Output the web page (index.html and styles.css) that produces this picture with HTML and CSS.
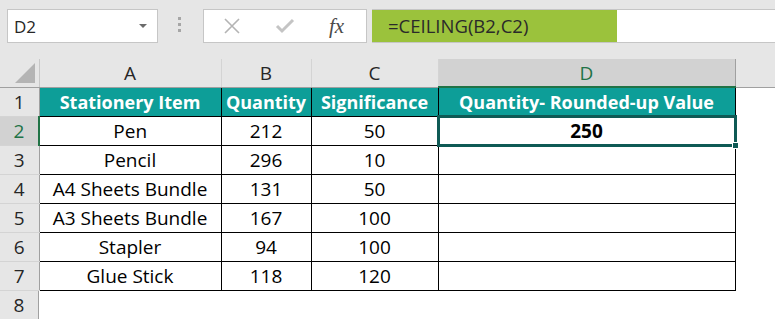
FILE: index.html
```html
<!DOCTYPE html>
<html lang="en">
<head>
  <meta charset="UTF-8">
  <title>CEILING example</title>
  <link rel="stylesheet" href="styles.css">
</head>
<body>
  <div class="toolbar">
    <div class="namebox">
      <span>D2</span>
      <svg class="caret" width="8" height="5" viewBox="0 0 8 5"><path d="M0 0h8L4 4z" fill="#6b6b6b"/></svg>
    </div>
    <div class="grip"><i></i><i></i><i></i></div>
    <div class="fx-buttons">
      <svg width="18" height="18" viewBox="0 0 18 18"><path d="M2 2l14 14M16 2L2 16" stroke="#b4b4b4" stroke-width="1.6" fill="none"/></svg>
      <svg width="20" height="18" viewBox="0 0 20 18"><path d="M2 9l5 5L18 3" stroke="#c4c4c4" stroke-width="3" fill="none"/></svg>
      <span class="fx">fx</span>
    </div>
    <div class="formula">
      <div class="formula-text">=CEILING(B2,C2)</div>
    </div>
  </div>

  <table class="sheet">
    <colgroup>
      <col class="c-row"><col class="c-a"><col class="c-b"><col class="c-c"><col class="c-d"><col>
    </colgroup>
    <tr class="colhead">
      <th class="corner"><span class="tri"></span></th>
      <th>A</th><th>B</th><th>C</th><th class="active">D</th><th class="blank"></th>
    </tr>
    <tr class="head">
      <th class="rowhead">1</th>
      <td>Stationery Item</td><td>Quantity</td><td>Significance</td><td>Quantity- Rounded-up Value</td><td class="out"></td>
    </tr>
    <tr>
      <th class="rowhead active">2</th>
      <td>Pen</td><td>212</td><td>50</td><td class="selected">250<span class="handle"></span></td><td class="out"></td>
    </tr>
    <tr>
      <th class="rowhead">3</th>
      <td>Pencil</td><td>296</td><td>10</td><td></td><td class="out"></td>
    </tr>
    <tr>
      <th class="rowhead">4</th>
      <td>A4 Sheets Bundle</td><td>131</td><td>50</td><td></td><td class="out"></td>
    </tr>
    <tr>
      <th class="rowhead">5</th>
      <td>A3 Sheets Bundle</td><td>167</td><td>100</td><td></td><td class="out"></td>
    </tr>
    <tr>
      <th class="rowhead">6</th>
      <td>Stapler</td><td>94</td><td>100</td><td></td><td class="out"></td>
    </tr>
    <tr>
      <th class="rowhead">7</th>
      <td>Glue Stick</td><td>118</td><td>120</td><td></td><td class="out"></td>
    </tr>
  </table>
  <div class="empty-row">
    <div class="rownum">8</div>
  </div>
</body>
</html>
```

FILE: styles.css
```css
body {
  margin: 0;
  width: 775px;
  height: 319px;
  overflow: hidden;
  background-color: #ffffff;
  font-family: "Open Sans", "Liberation Sans", sans-serif;
}

.toolbar {
  display: flex;
  align-items: flex-start;
  height: 59px;
  padding-top: 9px;
  box-sizing: border-box;
  background-color: #e6e6e6;
}

.namebox {
  display: flex;
  align-items: center;
  justify-content: space-between;
  width: 151px;
  height: 34px;
  margin-left: 7px;
  padding: 0 10px 0 6px;
  box-sizing: border-box;
  background-color: #ffffff;
  border: 1px solid #c6c6c6;
  font-size: 17px;
  color: #262626;
}

.grip {
  display: flex;
  flex-direction: column;
  gap: 3px;
  margin: 8px 22px 0 20px;
}

.grip i {
  display: block;
  width: 3px;
  height: 3px;
  background-color: #a6a6a6;
}

.fx-buttons {
  display: flex;
  align-items: center;
  gap: 34px;
  width: 164px;
  height: 34px;
  padding-left: 19px;
  box-sizing: border-box;
  background-color: #ffffff;
  border: 1px solid #c6c6c6;
}

.fx {
  font-family: "Liberation Serif", serif;
  font-style: italic;
  font-size: 21px;
  color: #4a4a4a;
}

.formula {
  flex: 1;
  height: 34px;
  margin-left: 5px;
  box-sizing: border-box;
  background-color: #ffffff;
  border-top: 1px solid #c6c6c6;
  border-bottom: 1px solid #c6c6c6;
}

.formula-text {
  width: 245px;
  height: 100%;
  padding-left: 16px;
  box-sizing: border-box;
  background-color: #9bc23c;
  color: #2a2a2a;
  font-size: 18.5px;
  line-height: 31px;
}

.sheet {
  border-collapse: collapse;
  table-layout: fixed;
  width: 775px;
}

.c-row { width: 39px; }
.c-a { width: 182px; }
.c-b { width: 90px; }
.c-c { width: 127px; }
.c-d { width: 297px; }

.sheet th,
.sheet td {
  padding: 0;
  height: 29px;
  text-align: center;
  font-size: 19px;
  line-height: 26px;
  font-weight: 400;
  color: #000000;
  box-sizing: border-box;
}

.sheet td {
  border: 1px solid #000000;
}

.colhead th {
  height: 28px;
  background-color: #e6e6e6;
  color: #262626;
  border-left: 1px solid #d4d4d4;
  border-bottom: 1px solid #a0a0a0;
  padding-top: 1px;
}

.colhead .corner {
  position: relative;
  border-left: none;
  border-right: 1px solid #c8c8c8;
}

.tri {
  position: absolute;
  right: 4px;
  bottom: 4px;
  width: 0;
  height: 0;
  border-left: 20px solid transparent;
  border-bottom: 20px solid #b4b4b4;
}

.colhead .active {
  background-color: #d2d2d2;
  color: #217346;
  border-bottom: 2px solid #217346;
}

.colhead .blank {
  border-left: 1px solid #a0a0a0;
}

.rowhead {
  background-color: #e6e6e6;
  border-bottom: 1px solid #d4d4d4;
  border-right: 1px solid #a0a0a0;
}

.sheet .rowhead {
  color: #262626;
}

.sheet .rowhead.active {
  background-color: #d2d2d2;
  color: #217346;
  border-right: 2px solid #217346;
}

.sheet .head td {
  background-color: #0d9e98;
  color: #ffffff;
  font-weight: 700;
  font-size: 18px;
}

.sheet .head td.out {
  background-color: transparent;
}

.sheet td.out {
  border-top: none;
  border-right: none;
  border-bottom: none;
}

.sheet td.selected {
  position: relative;
  font-weight: 700;
}

.sheet td.selected::after {
  content: "";
  position: absolute;
  left: -2px;
  top: -2px;
  right: -2px;
  bottom: -2px;
  border: 3px solid #0f5a55;
}

.handle {
  position: absolute;
  right: -4px;
  bottom: -4px;
  z-index: 1;
  width: 5px;
  height: 5px;
  background-color: #0f5a55;
  border: 1px solid #ffffff;
}

.empty-row {
  display: flex;
  height: 29px;
}

.rownum {
  width: 39px;
  box-sizing: border-box;
  background-color: #e6e6e6;
  border-right: 1px solid #a0a0a0;
  text-align: center;
  font-size: 19px;
  line-height: 28px;
  color: #262626;
}
```
